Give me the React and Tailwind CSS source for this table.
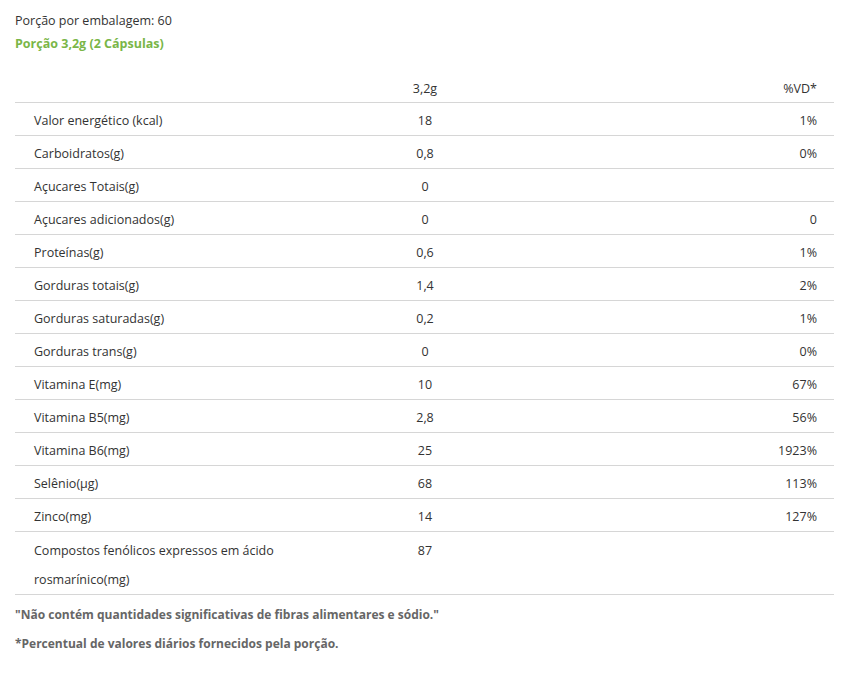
import React from "react";

const rows = [
  ["Valor energético (kcal)", "18", "1%"],
  ["Carboidratos(g)", "0,8", "0%"],
  ["Açucares Totais(g)", "0", ""],
  ["Açucares adicionados(g)", "0", "0"],
  ["Proteínas(g)", "0,6", "1%"],
  ["Gorduras totais(g)", "1,4", "2%"],
  ["Gorduras saturadas(g)", "0,2", "1%"],
  ["Gorduras trans(g)", "0", "0%"],
  ["Vitamina E(mg)", "10", "67%"],
  ["Vitamina B5(mg)", "2,8", "56%"],
  ["Vitamina B6(mg)", "25", "1923%"],
  ["Selênio(μg)", "68", "113%"],
  ["Zinco(mg)", "14", "127%"],
];

export default function App() {
  return (
    <div className="min-h-screen bg-white px-[15px] pt-[12px] text-[#333] font-['Open_Sans',sans-serif]">
      {/* Serving info */}
      <p className="text-[12.5px] leading-[18px]">Porção por embalagem: 60</p>
      <p className="mt-[5px] text-[12.5px] leading-[18px] font-bold text-[#7ab648]">
        Porção 3,2g (2 Cápsulas)
      </p>

      {/* Table */}
      <div className="mt-[19px] w-[819px] text-[12.5px]">
        <div className="grid grid-cols-[355px_110px_1fr] h-[31px] pt-[4px] items-center border-b border-[#d6d6d6]">
          <div />
          <div className="text-center">3,2g</div>
          <div className="text-right pr-[17px]">%VD*</div>
        </div>
        {rows.map(([name, value, vd]) => (
          <div
            key={name}
            className="grid grid-cols-[355px_110px_1fr] h-[33px] pt-[4px] items-center border-b border-[#d6d6d6]"
          >
            <div className="pl-[19px]">{name}</div>
            <div className="text-center">{value}</div>
            <div className="text-right pr-[17px]">{vd}</div>
          </div>
        ))}
        <div className="grid grid-cols-[355px_110px_1fr] pt-[4px] border-b border-[#d6d6d6]">
          <div className="pl-[19px] max-w-[300px] leading-[29px]">
            Compostos fenólicos expressos em ácido rosmarínico(mg)
          </div>
          <div className="text-center leading-[29px]">87</div>
          <div />
        </div>
      </div>

      {/* Notes */}
      <p className="mt-[11px] text-[12px] leading-[17px] font-bold text-[#666]">
        "Não contém quantidades significativas de fibras alimentares e sódio."
      </p>
      <p className="mt-[12px] text-[12px] leading-[17px] font-bold text-[#666]">
        *Percentual de valores diários fornecidos pela porção.
      </p>
    </div>
  );
}
